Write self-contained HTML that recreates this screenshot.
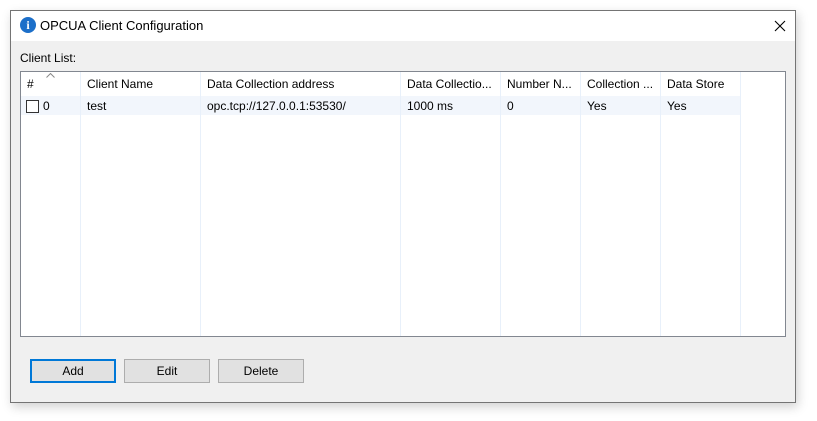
<!DOCTYPE html>
<html><head><style>
*{margin:0;padding:0;box-sizing:border-box}
body{width:817px;height:421px;background:#fff;font-family:"Liberation Sans","Noto Sans CJK SC",sans-serif;font-size:12px;color:#000;position:relative;overflow:hidden}
.win{position:absolute;left:10px;top:10px;width:786px;height:393px;border:1px solid #747474;background:#f0f0f0;box-shadow:2px 4px 10px rgba(0,0,0,.18)}
.title{position:absolute;left:0;top:0;width:784px;height:30px;background:#fff}
.title .t{position:absolute;left:29px;top:7px;font-size:13px}
.ico{position:absolute;left:9px;top:6px;width:16px;height:16px;border-radius:50%;background:#1c6fc9;color:#fff;font-weight:bold;font-size:12px;text-align:center;line-height:16px;font-family:"Liberation Serif",serif}
.x{position:absolute;left:763px;top:9px}
.lbl{position:absolute;left:9px;top:40px}
.list{position:absolute;left:9px;top:60px;width:766px;height:266px;border:1px solid #828790;background:#fff}
.c{position:absolute;top:0;height:264px;border-right:1px solid #e8f0fa}
.h{position:absolute;top:5px}
.row{position:absolute;left:0;top:24px;width:719px;height:19px;background:#f2f6fc}
.r{position:absolute;top:27px}
.btn{position:absolute;top:348px;width:86px;height:24px;border:1px solid #adadad;background:#e1e1e1;text-align:center;line-height:22px}
</style></head><body>
<div class="win">
<div class="title"><div class="ico">i</div><div class="t">OPCUA Client Configuration</div>
<svg class="x" width="12" height="12" viewBox="0 0 12 12"><path d="M1 1L11 11M11 1L1 11" stroke="#000" stroke-width="1.1"/></svg></div>
<div class="lbl">Client List:</div>
<div class="list">
<div class="row"></div>
<div class="c" style="left:0;width:60px"></div>
<div class="c" style="left:60px;width:120px"></div>
<div class="c" style="left:180px;width:200px"></div>
<div class="c" style="left:380px;width:100px"></div>
<div class="c" style="left:480px;width:80px"></div>
<div class="c" style="left:560px;width:80px"></div>
<div class="c" style="left:640px;width:80px"></div>
<svg style="position:absolute;left:25px;top:1px" width="9" height="5"><path d="M0.5 4.5L4.5 0.5L8.5 4.5" stroke="#888" fill="none"/></svg>
<div class="h" style="left:6px">#</div>
<div class="h" style="left:66px">Client Name</div>
<div class="h" style="left:186px">Data Collection address</div>
<div class="h" style="left:386px">Data Collectio...</div>
<div class="h" style="left:486px">Number N...</div>
<div class="h" style="left:566px">Collection ...</div>
<div class="h" style="left:646px">Data Store</div>
<div style="position:absolute;left:5px;top:28px;width:13px;height:13px;border:1px solid #333;background:#fff"></div>
<div class="r" style="left:22px">0</div>
<div class="r" style="left:66px">test</div>
<div class="r" style="left:186px">opc.tcp://127.0.0.1:53530/</div>
<div class="r" style="left:386px">1000 ms</div>
<div class="r" style="left:486px">0</div>
<div class="r" style="left:566px">Yes</div>
<div class="r" style="left:646px">Yes</div>
</div>
<div class="btn" style="left:19px;border:2px solid #0078d7;line-height:20px">Add</div>
<div class="btn" style="left:113px">Edit</div>
<div class="btn" style="left:207px">Delete</div>
</div>
</body></html>
